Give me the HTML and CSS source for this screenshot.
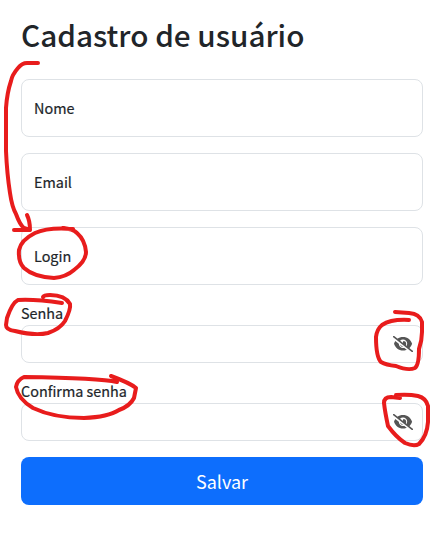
FILE: index.html
```html
<!DOCTYPE html>
<html lang="pt-BR">
<head>
<meta charset="utf-8">
<title>Cadastro de usuário</title>
<link rel="stylesheet" href="styles.css">
</head>
<body>
<svg class="defs" width="0" height="0" aria-hidden="true">
  <mask id="slash-gap" maskUnits="userSpaceOnUse" x="0" y="0" width="20" height="16">
    <rect width="20" height="16" fill="#fff"/>
    <path d="M-.6 1.2L19.4 16.6" stroke="#000" stroke-width="2.4"/>
  </mask>
  <symbol id="eye-slash" viewBox="0 0 20 16">
    <g mask="url(#slash-gap)">
      <path fill-rule="evenodd" d="M1 7.8C2.5 3.7 5.6 1.1 10 1.1S17.7 3.7 19.1 7.8C17.7 12 14.4 14.6 10 14.6S2.5 12 1 7.8ZM5.8 7.8A4.2 4.2 0 0 0 14.2 7.8A4.2 4.2 0 0 0 5.8 7.8Z"/>
      <path d="M10.3 5A3 3 0 1 1 7.2 8.2Q9.9 8.4 10.3 5Z"/>
    </g>
    <path d="M.7 .7L19.3 15.3" fill="none" stroke="#555" stroke-width="1.6" stroke-linecap="round"/>
  </symbol>
</svg>
<form class="form">
  <h1 class="title">Cadastro de usuário</h1>
  <div class="floating">Nome</div>
  <div class="floating">Email</div>
  <div class="floating">Login</div>
  <div class="group">
    <label class="label">Senha</label>
    <div class="control"><svg class="eye"><use href="#eye-slash"/></svg></div>
  </div>
  <div class="group">
    <label class="label">Confirma senha</label>
    <div class="control"><svg class="eye"><use href="#eye-slash"/></svg></div>
  </div>
  <button class="submit" type="button">Salvar</button>
</form>
<svg class="marks" viewBox="0 0 435 534" aria-hidden="true">
  <path d="M38 63H27Q22 63 18 68Q12 75 11 81Q7 93 6 108V151Q7 174 10 193Q12 207 16 214Q20 225 24 228L30 230M14 230H30Q30 221 27 215"/>
  <path d="M73 229Q48 227 35 233Q21 240 19 250Q18 262 24 268Q34 277 54 278Q66 277 74 270Q86 261 86 252Q85 240 77 233Q73 229 63 228"/>
  <path d="M62 303Q35 299 18 300Q12 303 7 318L6 325Q6 330 15 331Q35 336 48 333Q60 329 65 321Q71 309 70 304Q65 295 50 295Q44 295 43 297"/>
  <path d="M117 382Q100 378 24 377Q17 380 16 387Q18 399 33 408Q54 418 84 418Q108 417 119 410Q130 406 134 398L136 388Q130 383 111 376"/>
  <path d="M409 320Q391 319 382 325Q377 329 376 337Q376 357 381 362Q386 365 396 366Q408 371 415 368Q419 365 419 349Q422 340 422 332V322Q420 314 409 313L395 312"/>
  <path d="M400 398L391 397Q384 397 384 403Q385 412 388 426Q396 437 405 443Q414 447 419 444Q427 436 428 422V406Q426 398 418 396Q409 394 396 395"/>
</svg>
</body>
</html>
```
FILE: styles.css
```css
* { box-sizing: border-box; }

body {
  margin: 0;
  position: relative;
  height: 534px;
  overflow: hidden;
  background: #fff;
  color: #212529;
  font: 400 14.4px/24px "Noto Sans CJK JP", "Noto Sans", sans-serif;
}

.defs { position: absolute; }

.form {
  display: flex;
  flex-direction: column;
  gap: 16px;
  padding: 15px 12px 0 21px;
}

.title {
  height: 40px;
  margin: 0 0 8px;
  font-size: 29.7px;
  font-weight: 500;
  line-height: 40px;
  white-space: nowrap;
}

.floating,
.control {
  display: flex;
  align-items: center;
  border: 1px solid #dee2e6;
  border-radius: 8px;
}

.floating {
  height: 58px;
  padding: 0 12px;
}

.floating,
.label { -webkit-text-stroke: 0.2px #212529; }

.group {
  display: flex;
  flex-direction: column;
}

.label { height: 24px; }

.control {
  height: 38px;
  justify-content: flex-end;
  padding-right: 9px;
}

.eye {
  width: 20px;
  height: 16px;
  fill: #555;
}

.submit {
  height: 48px;
  border: 0;
  border-radius: 8px;
  background: #0d6efd;
  color: #fff;
  font: inherit;
  font-size: 18px;
}

.marks {
  position: absolute;
  top: 0;
  left: 0;
  width: 435px;
  height: 534px;
  fill: none;
  stroke: #e81c1c;
  stroke-width: 4;
  stroke-linecap: round;
  stroke-linejoin: round;
  pointer-events: none;
}
```
